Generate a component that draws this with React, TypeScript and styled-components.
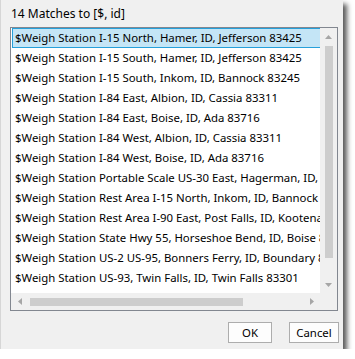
import React from 'react'
import styled, { createGlobalStyle } from 'styled-components';

const matches = [
    '$Weigh Station I-15 North, Hamer, ID, Jefferson 83425',
    '$Weigh Station I-15 South, Hamer, ID, Jefferson 83425',
    '$Weigh Station I-15 South, Inkom, ID, Bannock 83245',
    '$Weigh Station I-84 East, Albion, ID, Cassia 83311',
    '$Weigh Station I-84 East, Boise, ID, Ada 83716',
    '$Weigh Station I-84 West, Albion, ID, Cassia 83311',
    '$Weigh Station I-84 West, Boise, ID, Ada 83716',
    '$Weigh Station Portable Scale US-30 East, Hagerman, ID, Gooding 83332',
    '$Weigh Station Rest Area I-15 North, Inkom, ID, Bannock 83245',
    '$Weigh Station Rest Area I-90 East, Post Falls, ID, Kootenai 83854',
    '$Weigh Station State Hwy 55, Horseshoe Bend, ID, Boise 83629',
    '$Weigh Station US-2 US-95, Bonners Ferry, ID, Boundary 83805',
    '$Weigh Station US-93, Twin Falls, ID, Twin Falls 83301',
]

const Arrow = ({ dir }: { dir: 'up' | 'down' | 'left' | 'right' }) => {
    const pts = {
        up: '0,4 3.5,0 7,4',
        down: '0,0 3.5,4 7,0',
        left: '4,0 0,3.5 4,7',
        right: '0,0 4,3.5 0,7',
    }[dir]
    const vertical = dir === 'up' || dir === 'down'
    return (
        <svg width={vertical ? 7 : 4} height={vertical ? 4 : 7}>
            <polygon points={pts} fill="#a6a6a6" />
        </svg>
    )
}

export default function App() {
    return (
        <>
            <GlobalStyle />
            <Window>
                <Title>14 Matches to [$, id]</Title>
                <ListBox>
                    <Viewport>
                        {matches.map((m, i) => (
                            <Item key={m} selected={i === 0}>{m}</Item>
                        ))}
                    </Viewport>
                    <VScroll>
                        <ArrowButton><Arrow dir="up" /></ArrowButton>
                        <VTrack><VThumb /></VTrack>
                        <ArrowButton><Arrow dir="down" /></ArrowButton>
                    </VScroll>
                    <HScroll>
                        <ArrowButton><Arrow dir="left" /></ArrowButton>
                        <HTrack><HThumb /></HTrack>
                        <ArrowButton><Arrow dir="right" /></ArrowButton>
                    </HScroll>
                    <Corner />
                </ListBox>
                <Footer>
                    <Button wide={false}>OK</Button>
                    <Button wide>Cancel</Button>
                </Footer>
            </Window>
        </>
    )
}

const GlobalStyle = createGlobalStyle`
    body {
        margin: 0;
        background: #ffffff;
        font-family: 'Segoe UI', 'Noto Sans', sans-serif;
        font-size: 11.4px;
        color: #000;
    }
`;

const Window = styled.div`
    box-sizing: border-box;
    width: 343px;
    height: 349px;
    background: #f0f0f0;
    border-left: 1px solid #d6d6d6;
    padding: 0 4px 0 9px;
    display: flex;
    flex-direction: column;
    box-shadow: 4px 4px 5px rgba(0, 0, 0, 0.65);
`;

const Title = styled.div`
    height: 27px;
    line-height: 28px;
    font-size: 12px;
    padding-left: 1px;
    white-space: nowrap;
`;

const ListBox = styled.div`
    box-sizing: border-box;
    width: 328px;
    height: 284px;
    border: 1px solid #828790;
    background: #fff;
    display: grid;
    grid-template-columns: 1fr 17px;
    grid-template-rows: 1fr 17px;
    overflow: hidden;
`;

const Viewport = styled.div`
    padding: 0 0 0 1px;
    overflow: hidden;
    min-width: 0;
`;

const Item = styled.div<{ selected: boolean }>`
    box-sizing: border-box;
    height: 20px;
    line-height: 18px;
    padding-left: 2px;
    white-space: nowrap;
    border: 1px solid ${p => (p.selected ? '#26a0da' : 'transparent')};
    background: ${p => (p.selected ? '#c4e5f6' : 'transparent')};
    width: 310px;
    overflow: hidden;
`;

const VScroll = styled.div`
    background: #f0f0f0;
    display: flex;
    flex-direction: column;
`;

const HScroll = styled.div`
    background: #f0f0f0;
    display: flex;
`;

const Corner = styled.div`
    background: #f0f0f0;
`;

const ArrowButton = styled.div`
    flex: 0 0 17px;
    width: 17px;
    height: 17px;
    display: flex;
    align-items: center;
    justify-content: center;
`;

const VTrack = styled.div`
    flex: 1;
    display: flex;
    justify-content: center;
    padding-top: 1px;
`;

const VThumb = styled.div`
    width: 8px;
    height: 212px;
    background: #cdcdcd;
`;

const HTrack = styled.div`
    flex: 1;
    display: flex;
    align-items: center;
    padding-left: 2px;
`;

const HThumb = styled.div`
    width: 213px;
    height: 8px;
    background: #cdcdcd;
`;

const Footer = styled.div`
    display: flex;
    justify-content: flex-end;
    gap: 17px;
    margin-top: 11px;
`;

const Button = styled.div<{ wide: boolean }>`
    box-sizing: border-box;
    width: ${p => (p.wide ? '50px' : '44px')};
    height: 21px;
    border: 1px solid #adadad;
    background: #fdfdfd;
    display: flex;
    align-items: center;
    justify-content: center;
    line-height: 1;
`;
